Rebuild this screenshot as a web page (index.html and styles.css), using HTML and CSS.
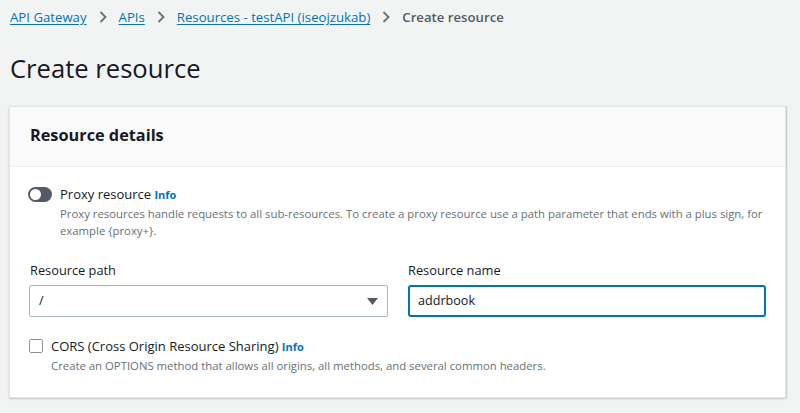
FILE: index.html
```html
<!DOCTYPE html>
<html lang="en">
<head>
<meta charset="utf-8">
<title>Create resource</title>
<link rel="stylesheet" href="styles.css">
</head>
<body>
<div class="page">
  <nav class="breadcrumb">
    <a href="#" class="crumb">API Gateway</a>
    <span class="sep"><svg width="8" height="12" viewBox="0 0 8 12"><path d="M1.5 1 L6.5 6 L1.5 11" fill="none" stroke="#687078" stroke-width="1.8"/></svg></span>
    <a href="#" class="crumb">APIs</a>
    <span class="sep"><svg width="8" height="12" viewBox="0 0 8 12"><path d="M1.5 1 L6.5 6 L1.5 11" fill="none" stroke="#687078" stroke-width="1.8"/></svg></span>
    <a href="#" class="crumb">Resources - testAPI (iseojzukab)</a>
    <span class="sep"><svg width="8" height="12" viewBox="0 0 8 12"><path d="M1.5 1 L6.5 6 L1.5 11" fill="none" stroke="#687078" stroke-width="1.8"/></svg></span>
    <span class="current">Create resource</span>
  </nav>

  <h1 class="title">Create resource</h1>

  <section class="card">
    <header class="card-header">
      <h2 class="card-title">Resource details</h2>
    </header>
    <div class="card-body">
      <div class="toggle-row">
        <span class="toggle"><span class="knob"></span></span>
        <div class="toggle-text">
          <div class="option-label">Proxy resource <a href="#" class="info">Info</a></div>
          <div class="desc">Proxy resources handle requests to all sub-resources. To create a proxy resource use a path parameter that ends with a plus sign, for example {proxy+}.</div>
        </div>
      </div>

      <div class="fields">
        <div class="field">
          <label class="field-label">Resource path</label>
          <div class="select">
            <span class="select-value">/</span>
            <svg class="caret" width="11" height="7" viewBox="0 0 11 7"><path d="M0 0 H11 L5.5 7 Z" fill="#545b64"/></svg>
          </div>
        </div>
        <div class="field">
          <label class="field-label">Resource name</label>
          <div class="input focused">addrbook</div>
        </div>
      </div>

      <div class="check-row">
        <span class="checkbox"></span>
        <div class="check-text">
          <div class="option-label">CORS (Cross Origin Resource Sharing) <a href="#" class="info">Info</a></div>
          <div class="desc">Create an OPTIONS method that allows all origins, all methods, and several common headers.</div>
        </div>
      </div>
    </div>
  </section>
</div>
</body>
</html>
```

FILE: styles.css
```css
* { box-sizing: border-box; }
html, body { margin: 0; padding: 0; }
body {
  background: #f2f3f3;
  font-family: "Open Sans", "Noto Sans", sans-serif;
  color: #16191f;
  width: 800px;
  height: 413px;
  overflow: hidden;
}
.page {
  padding: 7px 14px 0 9px;
}
.breadcrumb {
  display: flex;
  align-items: center;
  height: 20px;
  font-size: 13.2px;
  line-height: 20px;
  padding-left: 1px;
}
.crumb {
  color: #0073bb;
  text-decoration: underline;
  text-underline-offset: 2px;
}
.sep {
  display: flex;
  align-items: center;
  margin: 0 12px 0 12px;
}
.current {
  color: #545b64;
  font-weight: 600;
}
.title {
  margin: 26px 0 0 1px;
  font-size: 25.6px;
  line-height: 32px;
  font-weight: 400;
  color: #16191f;
}
.card {
  margin-top: 21px;
  background: #fff;
  border: 1px solid #e2e5e5;
  box-shadow: 0 1px 2px rgba(0,0,0,0.18), 1px 0 1px rgba(0,0,0,0.1);
}
.card-header {
  background: #fbfbfb;
  border-bottom: 1px solid #eaeded;
  padding: 17px 20px 20px 20px;
}
.card-title {
  margin: 0;
  font-size: 16.3px;
  line-height: 22px;
  font-weight: 700;
}
.card-body {
  padding: 17px 19px 23px 20px;
}
.toggle-row {
  display: flex;
  align-items: flex-start;
}
.toggle {
  flex: none;
  width: 24px;
  height: 15px;
  margin: 3px 8px 0 -2px;
  border-radius: 8px;
  background: #545b64;
  position: relative;
}
.knob {
  position: absolute;
  left: 2px;
  top: 2px;
  width: 11px;
  height: 11px;
  border-radius: 50%;
  background: #fff;
}
.option-label {
  font-size: 13px;
  line-height: 20px;
}
.info {
  color: #0073bb;
  font-size: 11px;
  font-weight: 700;
  text-decoration: none;
}
.desc {
  font-size: 11.35px;
  line-height: 17px;
  color: #687078;
}
.fields {
  display: grid;
  grid-template-columns: 1fr 1fr;
  column-gap: 20px;
  margin-top: 21px;
}
.field-label {
  display: block;
  font-size: 12.8px;
  line-height: 20px;
  margin-bottom: 5px;
}
.select, .input {
  height: 32px;
  border: 1px solid #aab7b8;
  border-radius: 2px;
  background: #fff;
  font-size: 12.6px;
  line-height: 20px;
  display: flex;
  align-items: center;
  padding: 0 9px;
}
.select {
  justify-content: space-between;
  margin-left: -1px;
}
.caret { margin-right: 0; }
.input.focused {
  border: 2px solid #0073bb;
  border-radius: 3px;
  padding-left: 8px;
}
.check-row {
  display: flex;
  align-items: flex-start;
  margin-top: 19px;
}
.checkbox {
  flex: none;
  width: 14px;
  height: 14px;
  border: 1px solid #879596;
  border-radius: 2px;
  background: #fff;
  margin: 3px 8px 0 -1px;
}
```
